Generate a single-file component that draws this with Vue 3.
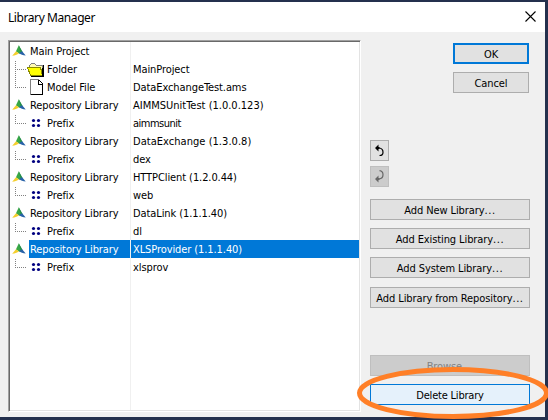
<script setup>
const rows = [
  { kind: 'root', label: 'Main Project', value: '' },
  { kind: 'folder', label: 'Folder', value: 'MainProject', more: true },
  { kind: 'file', label: 'Model File', value: 'DataExchangeTest.ams' },
  { kind: 'root', label: 'Repository Library', value: 'AIMMSUnitTest (1.0.0.123)', track: 0 },
  { kind: 'prefix', label: 'Prefix', value: 'aimmsunit', track: -0.5 },
  { kind: 'root', label: 'Repository Library', value: 'DataExchange (1.3.0.8)', track: 0.04 },
  { kind: 'prefix', label: 'Prefix', value: 'dex' },
  { kind: 'root', label: 'Repository Library', value: 'HTTPClient (1.2.0.44)' },
  { kind: 'prefix', label: 'Prefix', value: 'web' },
  { kind: 'root', label: 'Repository Library', value: 'DataLink (1.1.1.40)' },
  { kind: 'prefix', label: 'Prefix', value: 'dl' },
  { kind: 'root', label: 'Repository Library', value: 'XLSProvider (1.1.1.40)', selected: true },
  { kind: 'prefix', label: 'Prefix', value: 'xlsprov' },
]
const adders = ['Add New Library', 'Add Existing Library', 'Add System Library', 'Add Library from Repository']
</script>

<template>
  <div class="desktop">
    <div class="dialog">
      <header class="titlebar">
        <span class="title">Library Manager</span>
        <svg class="close" width="11" height="11" viewBox="0 0 11 11"><path d="M.5 .5 10.5 10.5M10.5 .5 .5 10.5" stroke="#000" stroke-width="1.1" /></svg>
      </header>
      <main class="body">
        <section class="list">
          <div v-for="(row, i) in rows" :key="i" class="row" :class="{ selected: row.selected }">
            <span v-if="row.kind === 'root'" class="gutter">
              <svg width="14" height="12" viewBox="0 0 14 12">
                <path d="M6.8 .3 3.900 6.400 7.200 8.600 10.700 7.600Z" fill="#39a845" />
                <path d="M6.800 .3 10.700 7.600 8.600 7.400Z" fill="#238a50" />
                <path d="M4 6.200 .2 10.800C2.800 10.500 5.200 9.600 7 8.400Z" fill="#f5cf2c" />
                <path d="M10.100 6.300 6.800 8.300C8.700 9.300 11 10.200 13.700 10.600Z" fill="#2862a8" />
              </svg>
            </span>
            <span v-else class="gutter child">
              <svg width="36" height="18" viewBox="0 0 36 18" class="branch" shape-rendering="crispEdges">
                <path :d="row.more ? 'M5.5 1V18' : 'M5.5 1V9'" stroke="#808080" stroke-dasharray="1 1" />
                <path d="M5 9.500H16" stroke="#808080" stroke-dasharray="1 1" />
                <g v-if="row.kind === 'folder'">
                  <path d="M19.500 5.500 21.500 3.500H24.500L26.500 5.500H32.500V15.500H21.500Z" fill="#fffbb0" stroke="#808080" />
                  <path d="M17.500 7.500H30.500L32.500 15.500H20.500Z" fill="#ffff00" stroke="#8a8a00" />
                  <path d="M33.500 5V16.500H21M32.500 8V16" fill="none" stroke="#000" />
                </g>
                <g v-else-if="row.kind === 'file'">
                  <path d="M20.500 1.500H28.500L32.500 5.500V16.500H20.500Z" fill="#fff" stroke="#808080" />
                  <path d="M28.500 1.500V6.500H32.500V16.500H20.500M29 2L33 6" fill="none" stroke="#000" />
                </g>
                <g v-else fill="#000080" shape-rendering="auto">
                  <circle cx="23.500" cy="6.500" r="1.600" /><circle cx="28.500" cy="6.500" r="1.600" />
                  <circle cx="23.500" cy="11.500" r="1.600" /><circle cx="28.500" cy="11.500" r="1.600" />
                </g>
              </svg>
            </span>
            <span class="label">{{ row.label }}</span>
            <span class="value" :style="{ letterSpacing: (row.track ?? -0.09) + 'px' }">{{ row.value }}</span>
          </div>
          <div class="row filler"><span class="value"></span></div>
        </section>
        <aside class="side">
          <div class="confirm">
            <button class="btn primary">OK</button>
            <button class="btn">Cancel</button>
          </div>
          <div class="history">
            <button class="btn icon">
              <svg width="9" height="13" viewBox="0 0 9 13"><path d="M0 4 3.500 .5V3H4.500V5H3.500V7.500Z" fill="#000" /><path d="M4 4C6.500 4.200 8 6 8 8.200C8 10 7 11.500 4.500 11.500" fill="none" stroke="#000" stroke-width="1.200" /></svg>
            </button>
            <button class="btn icon disabled">
              <svg width="9" height="13" viewBox="0 0 9 13"><path d="M0 9 3.500 5.500V8H4.500V10H3.500V12.500Z" fill="#666" /><path d="M4 9C6.500 8.800 8 7 8 4.800C8 2.500 7 1 4.500 .7" fill="none" stroke="#666" stroke-width="1.200" /></svg>
            </button>
          </div>
          <div class="adders">
            <button v-for="name in adders" :key="name" class="btn">{{ name }}<span class="dots">...</span></button>
          </div>
          <div class="edits">
            <button class="btn disabled">Browse<span class="dots">...</span></button>
            <button class="btn hot">Delete Library</button>
          </div>
        </aside>
      </main>
    </div>
    <svg class="highlight" width="194" height="56" viewBox="0 0 194 56"><ellipse cx="98" cy="29" rx="93.500" ry="23.500" fill="none" stroke="#ff7f27" stroke-width="5" /></svg>
  </div>
</template>

<style>
body { background: #24304d; overflow: hidden; }
</style>

<style scoped>
* { box-sizing: border-box; }
.desktop { position: relative; width: 548px; height: 420px; padding-top: 2px; overflow: hidden; background: #24304d; font: 11px "DejaVu Sans Condensed", "DejaVu Sans", sans-serif; font-stretch: condensed; color: #000; }
.dialog { width: 545px; height: 415px; background: #f0f0f0; display: flex; flex-direction: column; }
.titlebar { height: 30px; flex: none; background: #fff; display: flex; align-items: center; justify-content: space-between; padding: 0 9px 0 8px; }
.title { font: 12px "Noto Sans", sans-serif; letter-spacing: -.42px; }
.close { margin-top: -2px; }
.body { flex: 1; display: flex; padding: 8px 0 0 8px; }
.list { width: 353px; height: 372px; background: #fff; border: 1px solid; border-color: #a0a0a0 #fff #fff #a0a0a0; box-shadow: inset 1px 1px #696969, inset -1px -1px #e3e3e3; padding: 1px; display: flex; flex-direction: column; }
.row { height: 18px; flex: none; display: flex; line-height: 20px; white-space: nowrap; }
.gutter { width: 19px; flex: none; padding: 3px 0 0 2px; line-height: 0; }
.child { width: 36px; padding: 0; }
.branch { display: block; }
.label { flex: none; width: 101px; padding-left: 1px; letter-spacing: -.1px; }
.child + .label { width: 84px; }
.value { flex: 1; border-left: 1px solid #f0f0f0; padding-left: 2px; }
.selected .label, .selected .value { background: #0078d7; color: #fff; }
.filler { flex: 1; padding-left: 120px; }
.side { margin-left: 9px; width: 160px; display: flex; flex-direction: column; }
.confirm { display: flex; flex-direction: column; align-items: flex-end; gap: 8px; padding: 3px 1px 0 0; height: 100px; }
.confirm .btn { width: 76px; }
.history { display: flex; flex-direction: column; gap: 5px; height: 59px; }
.adders { display: flex; flex-direction: column; gap: 8px; height: 156px; }
.adders .btn:last-child { margin-top: 1px; }
.edits { display: flex; flex-direction: column; gap: 8px; }
.btn { height: 21px; flex: none; padding: 1px 0 0; margin: 0; background: #e1e1e1; border: 1px solid #adadad; font: inherit; letter-spacing: -.1px; line-height: 19px; color: #000; white-space: nowrap; }
.dots { letter-spacing: .6px; }
.primary { border: 2px solid #0078d7; line-height: 17px; }
.disabled { background: #ccc; border-color: #bfbfbf; color: #838383; }
.icon { width: 19px; padding: 0; display: flex; align-items: center; justify-content: center; }
.hot { background: #e5f1fb; border-color: #0078d7; letter-spacing: -.2px; }
.highlight { position: absolute; left: 355px; top: 364px; }
</style>
